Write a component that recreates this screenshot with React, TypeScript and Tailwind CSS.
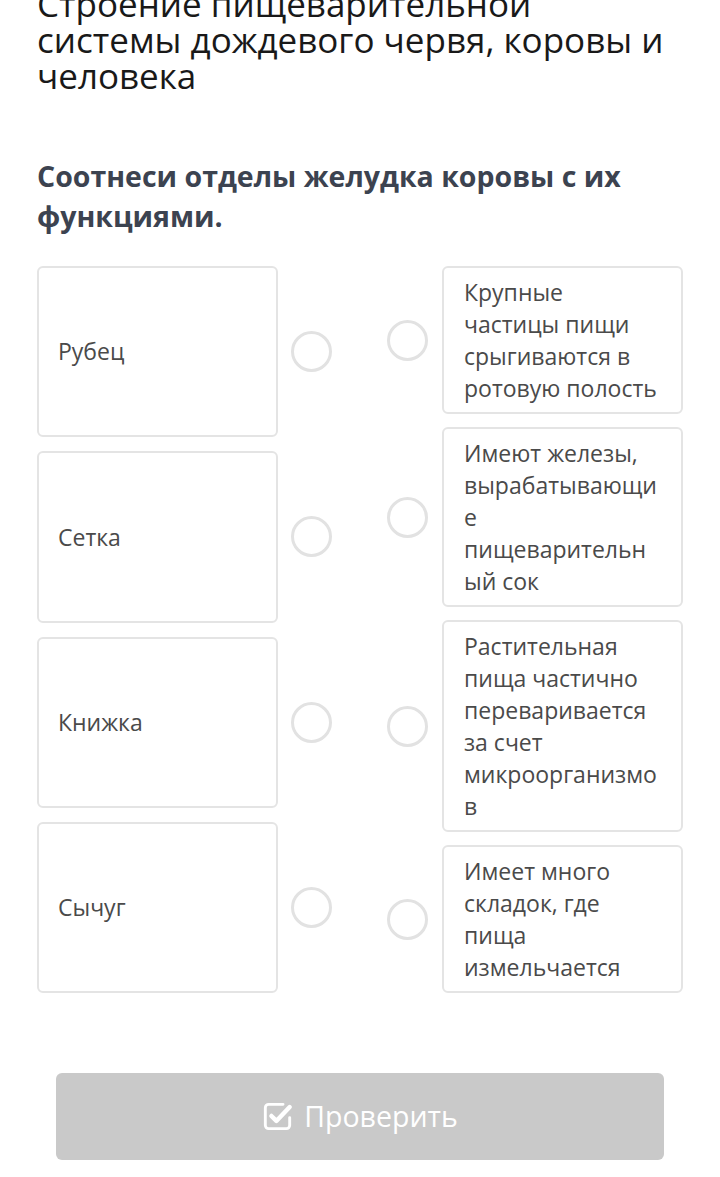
import React from "react";

const left = ["Рубец", "Сетка", "Книжка", "Сычуг"];

const right = [
  "Крупные частицы пищи срыгиваются в ротовую полость",
  "Имеют железы, вырабатывающие пищеварительный сок",
  "Растительная пища частично переваривается за счет микроорганизмов",
  "Имеет много складок, где пища измельчается",
];

const Circle = () => (
  <div className="w-[41px] h-[41px] shrink-0 rounded-full border-[3px] border-[#e2e2e2] bg-white"></div>
);

const CheckSquare = () => (
  <svg width="31" height="31" viewBox="0 0 28 28" fill="none" stroke="white" strokeLinecap="round" strokeLinejoin="round">
    <path d="M19 3H6a3 3 0 0 0-3 3v16a3 3 0 0 0 3 3h16a3 3 0 0 0 3-3v-7" strokeWidth="2.6" />
    <path d="M8.5 13.5l4.5 4.5 12-12.5" strokeWidth="4" />
  </svg>
);

export default function App() {
  return (
    <div
      className="min-h-[1177px] bg-white overflow-hidden"
      style={{ fontFamily: '"Open Sans", "Noto Sans", sans-serif' }}
    >
      <h1 className="mt-[-14px] pl-[37px] pr-[40px] text-[35px] leading-[36px] font-normal text-[#191919]">
        Строение пищеварительной системы дождевого червя, коровы и человека
      </h1>

      <h2 className="mt-[62px] px-[37px] text-[28.5px] leading-[40px] font-bold text-[#3c4350]">
        Соотнеси отделы желудка коровы с их функциями.
      </h2>

      <div className="mt-[30px] px-[37px] flex justify-between items-stretch">
        <div className="flex flex-col gap-[14px]">
          {left.map((t) => (
            <div key={t} className="flex-1 flex items-center">
              <div className="w-[241px] h-full flex items-center px-[19px] border-2 border-[#e4e4e4] rounded-md text-[23px] text-[#4a4a4a]">
                {t}
              </div>
              <div className="ml-[13px]">
                <Circle />
              </div>
            </div>
          ))}
        </div>

        <div className="flex flex-col gap-[13px]">
          {right.map((t) => (
            <div key={t} className="flex items-center">
              <Circle />
              <div className="ml-[14px] w-[241px] pl-[20px] pr-[21px] py-[8px] border-2 border-[#e4e4e4] rounded-md text-[23px] leading-[32px] text-[#4a4a4a] break-words">
                {t}
              </div>
            </div>
          ))}
        </div>
      </div>

      <div className="mt-[80px] px-[56px]">
        <button className="w-full h-[87px] rounded-md bg-[#c9c9c9] flex items-center justify-center gap-[11px] text-white text-[28.5px]">
          <CheckSquare />
          <span>Проверить</span>
        </button>
      </div>
    </div>
  );
}
